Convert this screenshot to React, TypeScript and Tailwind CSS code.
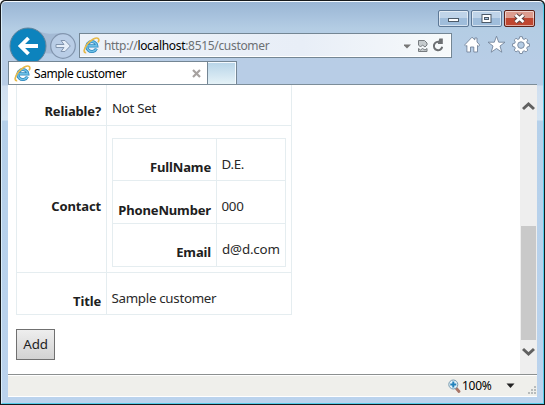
import React from "react";

function IELogo() {
  return (
    <svg width="17" height="17" viewBox="0 0 17 17" className="shrink-0">
      <path d="M13.4 11.6A5 5 0 1 1 13.8 8.9H5.2" fill="none" stroke="#2c86bd" strokeWidth="3.1" />
      <path d="M13.4 11.6A5 5 0 1 1 13.8 8.9H5.2" fill="none" stroke="#6cc0e6" strokeWidth="1.6" />
      <path d="M3.2 15.6C.2 16 .6 12 4 7.6 8 2.5 13.4-.2 15.3 1.6c.9.9.6 2.3-.2 3.8" fill="none" stroke="#e6b94a" strokeWidth="1.7" />
    </svg>
  );
}

function WindowButtons() {
  const base = "flex h-[17px] items-center justify-center rounded-[2px] border shadow-[inset_0_0_0_1px_rgba(255,255,255,0.55)]";
  return (
    <div className="flex gap-[2px]">
      <div className={`${base} w-[31px] border-[#5d7896] bg-linear-to-b from-[#bfd4e9] from-50% to-[#9fbddb] to-50%`}>
        <svg width="13" height="11"><rect x="1.5" y="5.5" width="10" height="3" fill="#fff" stroke="#4c5a68" /></svg>
      </div>
      <div className={`${base} w-[31px] border-[#5d7896] bg-linear-to-b from-[#bfd4e9] from-50% to-[#9fbddb] to-50%`}>
        <svg width="11" height="11"><rect x="1" y="1.5" width="9" height="8" fill="#fff" stroke="#4c5a68" /><rect x="3.500" y="4.500" width="4" height="2" fill="#a9c4e0" stroke="#4c5a68" /></svg>
      </div>
      <div className={`${base} w-[31px] border-[#5c2119] bg-linear-to-b from-[#dc9c8e] from-45% to-[#bf4630] to-50%`}>
        <svg width="13" height="11" viewBox="0 0 13 11">
          <path d="M2.500 2 10.500 9M10.500 2 2.500 9" stroke="#5a4544" strokeWidth="4.600" />
          <path d="M2.500 2 10.500 9M10.500 2 2.500 9" stroke="#fff" strokeWidth="2.700" />
        </svg>
      </div>
    </div>
  );
}

function NavButtons() {
  return (
    <svg width="71" height="36" viewBox="0 0 71 36" className="shrink-0">
      <path d="M27 2C37 8 44 7 53 6L60 8 56 27 31 26Z" fill="#9fb3cf" opacity=".75" />
      <circle cx="20" cy="19" r="18" fill="#0d83bd" stroke="#64849b" />
      <path d="M30 19H12M20.500 11 12.500 19l8 8" fill="none" stroke="#fff" strokeWidth="3.800" />
      <circle cx="55" cy="19" r="12.300" fill="#b9cde6" stroke="#8295ae" strokeWidth="1.200" />
      <path d="M48 17.500h8l-3-4h4l5.300 5.500-5.300 5.500h-4l3-4h-8z" fill="#e5eef8" stroke="#8194ad" />
    </svg>
  );
}

function AddressBar() {
  return (
    <div className="mt-[6px] flex h-[25px] w-[373px] items-center border border-[#748694] bg-linear-to-r from-[#edf2f9] via-[#e8eef7] via-60% to-[#f7fafb] pl-[3px] shadow-[inset_-1px_-1px_0_#fff]">
      <IELogo />
      <div className="ml-[4px] w-[300px] whitespace-nowrap pt-px text-[12px] leading-[22px] tracking-[-0.32px] text-[#6c7074]">
        http://<span className="text-black">localhost</span>:8515/customer
      </div>
      <svg width="45" height="18" viewBox="0 0 45 18" className="shrink-0">
        <path d="M-1 7.500h8L3 11.500z" fill="#777" />
        <path d="M14.500 8V3.500h6l2.500 2.500V8l-2 2-2.500-2-2 2z" fill="#c5cbce" stroke="#777c80" />
        <path d="M14.500 11.500V14.500h8.500V11.500l-2 1.500-2.500-1.500-2 1.500z" fill="#c5cbce" stroke="#777c80" />
        <path d="M35.800 5.200A4.200 4.200 0 1 0 38.200 9.800" fill="none" stroke="#6c6f72" strokeWidth="2" />
        <path d="M35.300 1.500H38.800V7H33.800z" fill="#6c6f72" />
      </svg>
    </div>
  );
}

function BrowserTools() {
  return (
    <svg width="68" height="20" viewBox="0 0 68 20" className="ml-[12px] mt-[8px] shrink-0">
      <g fill="#fff" stroke="#74859b" strokeWidth=".9" strokeLinejoin="round">
        <path d="M.6 10 8 2.200l2.800 2.700V3h2.200v4L15.700 10l-1.300 1.300-.9-.8V17H9.800v-5H6.500v5H2.900v-6.500l-1 .8z" />
        <path d="m32.500 1.200 2.200 6h6.300l-5 3.800 1.800 6.200-5.300-3.700-5.300 3.700 1.800-6.200-5-3.800h6.300z" />
        <path fillRule="evenodd" d="M55.700 1.700h2.600l.5 2.100 1.400.6 1.800-1.100 1.800 1.800-1.100 1.800.6 1.400 2.100.5v2.600l-2.100.5-.6 1.400 1.100 1.800-1.800 1.800-1.800-1.100-1.400.6-.5 2.100h-2.600l-.5-2.100-1.400-.6-1.800 1.100-1.800-1.800 1.100-1.800-.6-1.400-2.100-.5V8.800l2.100-.5.6-1.400-1.100-1.800 1.800-1.800 1.800 1.100 1.400-.6zM57 6.800a3.300 3.300 0 1 0 0 6.600 3.300 3.300 0 0 0 0-6.600z" />
      </g>
    </svg>
  );
}

function Tabs() {
  return (
    <div className="flex h-[24px] border-b border-[#7c8d99]">
      <div className="flex w-[200px] items-center border-x border-t border-[#748694] bg-white pl-[5px]">
        <IELogo />
        <span className="ml-[3px] w-[158px] whitespace-nowrap pt-px text-[12px] leading-[22px] tracking-[-0.4px] text-black">Sample customer</span>
        <svg width="9" height="9" viewBox="0 0 9 9" className="shrink-0"><path d="m1 1 7 7M8 1 1 8" stroke="#a7a2a0" strokeWidth="2.200" /></svg>
      </div>
      <div className="w-[29px] border-r border-t border-[#748694] bg-linear-to-b from-[#b7d4e8] to-[#e5f2f7] shadow-[inset_-1px_1px_0_#f4faff]" />
    </div>
  );
}

function Page() {
  const label = "border border-[#e5edf0] p-0 text-right align-top font-bold text-[13px] leading-[18px] tracking-[-0.15px] text-[#202020]";
  const value = "border border-[#e5edf0] p-0 align-top text-[13.33px] leading-[18px] tracking-[-0.3px] text-[#292929] whitespace-nowrap";
  return (
    <main className="h-[289px] w-[512px] overflow-hidden bg-white pl-[8px]">
      <table className="w-[276px] table-fixed border-collapse">
        <colgroup><col className="w-[90px]" /><col className="w-[185px]" /></colgroup>
        <tbody>
          <tr className="h-[40px]">
            <td className={`${label} border-t-0 pr-[5px] pt-[17px]`}>Reliable?</td>
            <td className={`${value} border-t-0 pl-[5px] pt-[14px]`}>Not Set</td>
          </tr>
          <tr className="h-[147px]">
            <td className={`${label} pr-[5px] pt-[71px]`}>Contact</td>
            <td className={`${value} pl-[5px] pt-[12px]`}>
              <table className="w-[174px] table-fixed border-collapse">
                <colgroup><col className="w-[104px]" /><col className="w-[69px]" /></colgroup>
                <tbody>
                  <tr className="h-[42px]">
                    <td className={`${label} pr-[5px] pt-[19px]`}>FullName</td>
                    <td className={`${value} pl-[4.5px] pt-[16px]`}>D.E.</td>
                  </tr>
                  <tr className="h-[43px]">
                    <td className={`${label} pr-[5px] pt-[20px]`}>PhoneNumber</td>
                    <td className={`${value} pl-[4.5px] pt-[16px]`}>000</td>
                  </tr>
                  <tr className="h-[43px]">
                    <td className={`${label} pr-[5px] pt-[19px]`}>Email</td>
                    <td className={`${value} pl-[5px] pt-[16px] tracking-[-0.15px]`}>d@d.com</td>
                  </tr>
                </tbody>
              </table>
            </td>
          </tr>
          <tr className="h-[42px]">
            <td className={`${label} pr-[5px] pt-[19px]`}>Title</td>
            <td className={`${value} pl-[4.5px] pt-[16px]`}>Sample customer</td>
          </tr>
        </tbody>
      </table>
      <button className="mt-[14px] block h-[31px] w-[39px] border border-[#707070] bg-linear-to-b from-[#eeeeee] to-[#d2d2d2] text-[13.33px] leading-[28px] tracking-[-0.2px] text-[#222]">Add</button>
    </main>
  );
}

function Scrollbar() {
  return (
    <div className="flex h-[289px] w-[17px] flex-col items-center bg-[#eeeeee]">
      <svg width="13" height="10" viewBox="0 0 13 10" className="mt-[16px] shrink-0"><path d="m1 8 5.500-5L12 8" fill="none" stroke="#606060" strokeWidth="3" /></svg>
      <div className="mt-[115px] h-[114px] w-[15px] bg-[#c9c9c9]" />
      <svg width="13" height="10" viewBox="0 0 13 10" className="mt-[7px] shrink-0"><path d="m1 2 5.500 5L12 2" fill="none" stroke="#606060" strokeWidth="3" /></svg>
    </div>
  );
}

function StatusBar() {
  return (
    <div className="flex h-[23px] items-center border-t border-[#8c9090] bg-[#efefeb] pl-[440px] shadow-[inset_0_1px_0_#fff,inset_0_-1px_0_#fff]">
      <svg width="13" height="14" viewBox="0 0 13 14" className="shrink-0">
        <path d="m8 9 3 3.500" stroke="#a87567" strokeWidth="2.800" strokeLinecap="round" />
        <circle cx="5.300" cy="5.500" r="4.500" fill="#e4f3fa" stroke="#7598ad" />
        <path d="M5.300 2.500v6M2.300 5.500h6" stroke="#2382bb" strokeWidth="2" />
      </svg>
      <span className="ml-[1px] w-[44px] whitespace-nowrap text-[12px] leading-[20px] tracking-[-0.25px] text-black">100%</span>
      <svg width="31" height="22" viewBox="0 0 31 22" className="shrink-0">
        <path d="M0.500 8.500h8l-4 4.500z" fill="#222" />
        <g fill="#b8bcbc">
          <rect x="28" y="11" width="2" height="2" />
          <rect x="25" y="14" width="2" height="2" /><rect x="28" y="14" width="2" height="2" />
          <rect x="22" y="17" width="2" height="2" /><rect x="25" y="17" width="2" height="2" /><rect x="28" y="17" width="2" height="2" />
        </g>
      </svg>
    </div>
  );
}

export default function App() {
  return (
    <div className="h-[405px] w-[545px] overflow-hidden rounded-t-[5px] bg-[#16191c] p-px font-['Noto_Sans','Open_Sans',sans-serif]">
      <div className="h-[403px] overflow-hidden rounded-t-[5px] border border-t-[#f4faff] border-l-[#dbeefa] border-r-[#54cce9] border-b-[#54cce9] bg-[linear-gradient(to_bottom,#9ab6d5_0px,#b4cde4_27px,#b8cde6_60px,#b8cde6_83px,#d0dff0_84px,#d5e5f3_118px,#b5d0ea_119px,#bbd3ed_100%)] px-[6px]">
        <div className="flex h-[25px] justify-end pr-[2px] pt-[8px]"><WindowButtons /></div>
        <div className="flex h-[34px] items-start"><NavButtons /><AddressBar /><BrowserTools /></div>
        <Tabs />
        <div className="flex bg-white"><Page /><Scrollbar /></div>
        <StatusBar />
      </div>
    </div>
  );
}
